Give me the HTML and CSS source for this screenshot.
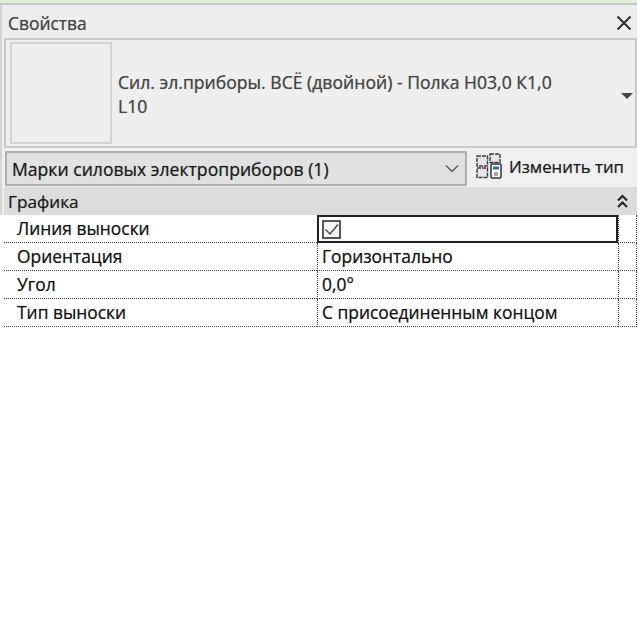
FILE: index.html
```html
<!DOCTYPE html>
<html lang="ru">
<head>
  <meta charset="UTF-8">
  <title>Свойства</title>
  <link rel="stylesheet" href="styles.css">
</head>
<body>
  <div class="strip"></div>
  <div class="panel">
    <div class="head">
      <div class="title">
        <span>Свойства</span>
        <svg class="close" width="16" height="16" viewBox="0 0 16 16"><path d="M1.5 1.5 L14.5 14.5 M14.5 1.5 L1.5 14.5" stroke="#333" stroke-width="2.2" fill="none"/></svg>
      </div>
      <div class="type">
        <div class="preview"></div>
        <div class="type-name">Сил. эл.приборы. ВСЁ (двойной) - Полка Н03,0 К1,0<br>L10</div>
        <svg class="type-arrow" width="14" height="8" viewBox="0 0 14 8"><path d="M1 1 H13 L7 7 Z" fill="#444"/></svg>
      </div>
      <div class="filter">
        <div class="combo">
          <span>Марки силовых электроприборов (1)</span>
          <svg width="14" height="9" viewBox="0 0 14 9"><path d="M1 1.5 L7 7.5 L13 1.5" stroke="#555" stroke-width="1.3" fill="none"/></svg>
        </div>
        <div class="edit-type">
          <svg width="26" height="26" viewBox="0 0 26 26">
            <path d="M1 3 H11.5 V13 H1 Z M1 15 H11.5 V24.5 H1 Z M14 1 H24 V9.5 H14 Z" fill="#e6e6e6" stroke="#3a3a3a" stroke-width="1.4" stroke-dasharray="4 1"/>
            <rect x="15" y="11" width="10" height="14" rx="1" fill="#fff" stroke="#333" stroke-width="1.5"/>
            <rect x="17" y="13.5" width="6" height="3" fill="#2f6cb0"/>
            <circle cx="20" cy="21" r="1.5" fill="none" stroke="#555"/>
          </svg>
          <span>Изменить тип</span>
        </div>
      </div>
      <div class="section">
        <span>Графика</span>
        <svg width="11" height="15" viewBox="0 0 11 15"><path d="M1 6.5 L5.5 2 L10 6.5 M1 13 L5.5 8.5 L10 13" stroke="#222" stroke-width="2.1" fill="none"/></svg>
      </div>
    </div>
    <div class="props">
      <div class="name">Линия выноски</div>
      <div class="value active"><span class="check"><svg width="15" height="13" viewBox="0 0 15 13"><path d="M1.5 6.5 L6 11 L14 1.5" stroke="#444" stroke-width="1.4" fill="none"/></svg></span></div>
      <div class="end"></div>
      <div class="name">Ориентация</div>
      <div class="value">Горизонтально</div>
      <div class="end"></div>
      <div class="name">Угол</div>
      <div class="value">0,0°</div>
      <div class="end"></div>
      <div class="name">Тип выноски</div>
      <div class="value">С присоединенным концом</div>
      <div class="end"></div>
    </div>
  </div>
</body>
</html>
```

FILE: styles.css
```css
body {
  margin: 0;
  background: #fff;
  font: 17.4px "Open Sans", "Noto Sans", sans-serif;
  color: #111;
  text-shadow: 0 0 .7px rgba(0, 0, 0, .45);
}
.strip {
  width: 637px;
  height: 3px;
  background: #e4efda;
}
.panel {
  width: 637px;
  border-top: 2px solid #c6c6c6;
}
.head {
  background: #f0f0f0;
  border-left: 2px solid #d4d4d4;
}
.title {
  height: 33px;
  padding: 2px 5px 0 6px;
  background: #eeeeee;
  display: flex;
  align-items: center;
  justify-content: space-between;
  color: #444;
  box-sizing: border-box;
}
.type {
  height: 110px;
  padding: 0 0 0 4px;
  margin-left: 2px;
  background: #efefef;
  border: 2px solid #c9c9c9;
  box-sizing: border-box;
  display: flex;
  align-items: center;
}
.preview {
  width: 102px;
  height: 102px;
  border: 2px solid #d2d2d2;
  box-sizing: border-box;
  flex: none;
}
.type-name {
  flex: 1;
  padding: 2px 0 0 6px;
  font-size: 17.6px;
  line-height: 24px;
  color: #444;
}
.type-arrow {
  margin: 6px 1px 0 0;
  flex: none;
}
.filter {
  height: 39px;
  padding: 3px 0 0 3px;
  box-sizing: border-box;
  display: flex;
}
.combo {
  width: 462px;
  height: 35px;
  padding: 0 6px 0 5px;
  background: #e1e1e1;
  border: 2px solid #adadad;
  box-sizing: border-box;
  display: flex;
  align-items: center;
  justify-content: space-between;
  font-size: 17.6px;
  color: #1a1a1a;
}
.edit-type {
  margin-left: 9px;
  height: 30px;
  display: flex;
  align-items: center;
  gap: 7px;
  font-size: 16.8px;
  color: #1a1a1a;
}
.section {
  height: 28px;
  margin-left: 2px;
  padding: 0 9px 0 4px;
  background: #dcdcdc;
  display: flex;
  align-items: center;
  justify-content: space-between;
  box-sizing: border-box;
  font-size: 17.2px;
  color: #1a1a1a;
}
.props {
  margin-left: 4px;
  display: grid;
  grid-template-columns: 313px 301px 19px;
  grid-auto-rows: 28px;
  color: #111;
}
.props > div {
  border-bottom: 1px dotted #444;
  box-sizing: border-box;
  display: flex;
  align-items: center;
  padding-bottom: 2px;
}
.name {
  padding-left: 13px;
}
.value {
  padding-left: 4px;
  border-left: 1px dotted #444;
}
.end {
  border-left: 1px dotted #444;
  border-right: 1px dotted #444;
}
.props > .active {
  border: 2px solid #222;
  padding: 0 0 0 3px;
}
.check {
  width: 19px;
  height: 19px;
  background: #f4f4f4;
  border: 2px solid #555;
  box-sizing: border-box;
  display: flex;
  align-items: center;
  justify-content: center;
}
```
